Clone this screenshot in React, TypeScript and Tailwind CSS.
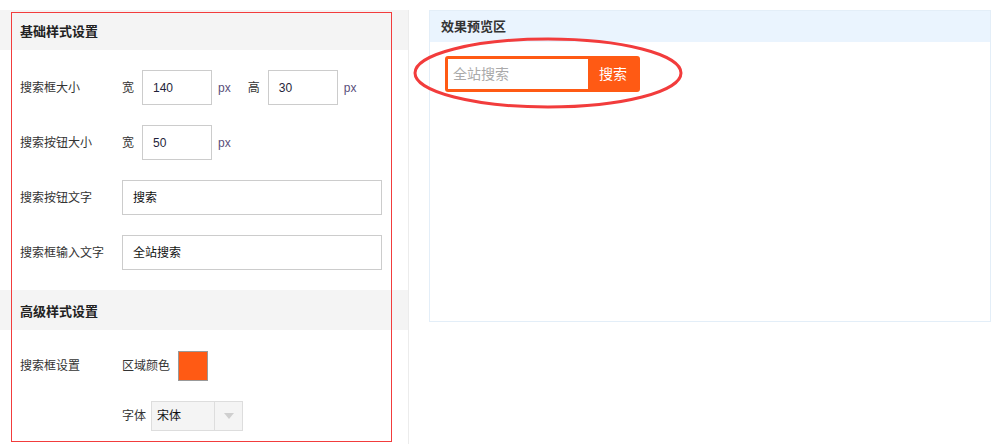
import React from 'react';

const font = "font-['Liberation_Sans','Noto_Sans_CJK_SC',sans-serif]";

function SectionHeader({ title }: { title: string }) {
  return (
    <div className="h-[40px] bg-[#f4f4f4] flex items-center pt-[3px] pl-[20px] text-[13px] font-bold text-[#222]">
      {title}
    </div>
  );
}

function Row({ label, children }: { label: string; children: React.ReactNode }) {
  return (
    <div className="flex items-center h-[35px]">
      <div className="w-[122px] pl-[20px] text-[12px] text-[#333] shrink-0 whitespace-nowrap">{label}</div>
      {children}
    </div>
  );
}

function SmallInput({ value }: { value: string }) {
  return (
    <div className="w-[70px] h-[35px] border border-[#ccc] flex items-center pl-[10px] text-[12px] text-[#1f1f3a]">
      {value}
    </div>
  );
}

function WideInput({ value }: { value: string }) {
  return (
    <div className="w-[260px] h-[35px] border border-[#ccc] flex items-center pl-[10px] text-[12px] text-[#111]">
      {value}
    </div>
  );
}

export default function App() {
  return (
    <div className={`relative w-[994px] h-[444px] bg-white overflow-hidden ${font}`}>
      <div className="flex pt-[10px] h-full">
        {/* 左侧设置区 */}
        <div className="w-[409px] border-r border-[#ececec] h-full shrink-0">
          <SectionHeader title="基础样式设置" />
          <div className="flex flex-col gap-[20px] pt-[20px] pb-[20px]">
            <Row label="搜索框大小">
              <span className="text-[12px] text-[#333]">宽</span>
              <div className="ml-[8px]"><SmallInput value="140" /></div>
              <span className="ml-[6px] text-[12px] text-[#5a4f7a]">px</span>
              <span className="ml-[17px] text-[12px] text-[#333]">高</span>
              <div className="ml-[8px]"><SmallInput value="30" /></div>
              <span className="ml-[6px] text-[12px] text-[#5a4f7a]">px</span>
            </Row>
            <Row label="搜索按钮大小">
              <span className="text-[12px] text-[#333]">宽</span>
              <div className="ml-[8px]"><SmallInput value="50" /></div>
              <span className="ml-[6px] text-[12px] text-[#5a4f7a]">px</span>
            </Row>
            <Row label="搜索按钮文字">
              <WideInput value="搜索" />
            </Row>
            <Row label="搜索框输入文字">
              <WideInput value="全站搜索" />
            </Row>
          </div>
          <SectionHeader title="高级样式设置" />
          <div className="flex flex-col gap-[20px] pt-[21px]">
            <div className="flex items-center h-[30px]">
              <div className="w-[122px] pl-[20px] text-[12px] text-[#333] shrink-0">搜索框设置</div>
              <span className="text-[12px] text-[#333]">区域颜色</span>
              <div className="ml-[8px] w-[30px] h-[30px] bg-[#ff5a14] border border-[#999]" />
            </div>
            <div className="flex items-center h-[30px]">
              <div className="w-[122px] shrink-0" />
              <span className="text-[12px] text-[#333]">字体</span>
              <div className="ml-[5px] w-[92px] h-[30px] bg-[#f4f4f4] border border-[#ddd] flex">
                <div className="w-[62px] flex items-center pl-[5px] text-[12px] text-[#111]">宋体</div>
                <div className="flex-1 border-l border-[#ddd] flex items-center justify-center">
                  <svg width="10" height="6" viewBox="0 0 10 6">
                    <path d="M0 0 L10 0 L5 6 Z" fill="#cfcfcf" />
                  </svg>
                </div>
              </div>
            </div>
          </div>
        </div>

        {/* 右侧预览区 */}
        <div className="ml-[20px] w-[562px] h-[312px] border border-[#e3eef8] shrink-0">
          <div className="h-[31px] bg-[#eaf4fe] flex items-center pl-[11px] text-[13px] font-bold text-[#333]">
            效果预览区
          </div>
          <div className="pl-[15px] pt-[14px]">
            <div className="inline-flex bg-[#ff5a14] rounded-[3px] p-[3px] pr-[2px]">
              <div className="w-[140px] h-[30px] bg-white flex items-center pl-[5px] text-[14px] text-[#aaa]">
                全站搜索
              </div>
              <div className="w-[50px] h-[30px] flex items-center justify-center text-[14px] text-white">
                搜索
              </div>
            </div>
          </div>
        </div>
      </div>

      {/* 标注：红框 */}
      <div className="absolute left-[11px] top-[12px] w-[381px] h-[430px] border border-[#f23c3c] pointer-events-none" />
      {/* 标注：红色椭圆 */}
      <svg className="absolute left-[410px] top-[34px] pointer-events-none" width="280" height="80" viewBox="0 0 280 80">
        <ellipse cx="138" cy="39" rx="133" ry="34" fill="none" stroke="#f23c3c" strokeWidth="3" />
      </svg>
    </div>
  );
}
